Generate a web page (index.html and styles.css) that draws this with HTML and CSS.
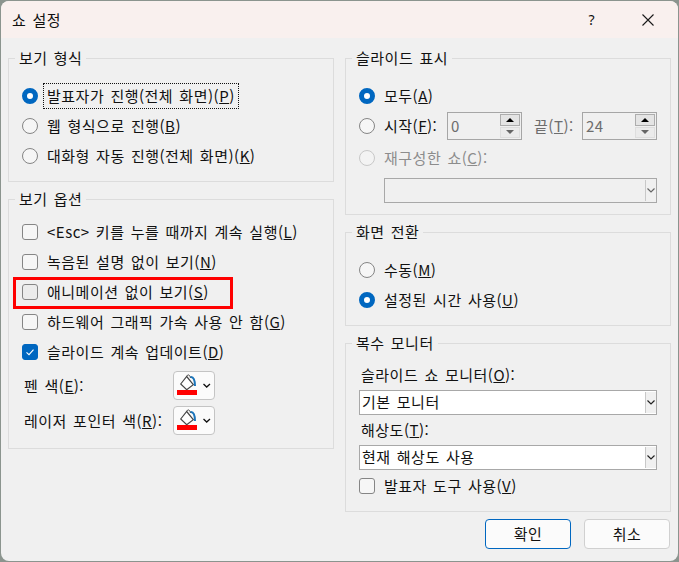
FILE: index.html
```html
<!DOCTYPE html>
<html lang="ko">
<head>
<meta charset="utf-8">
<title>쇼 설정</title>
<link rel="stylesheet" href="styles.css">
</head>
<body>
<div class="window">
  <header class="titlebar">
    <span class="title">쇼 설정</span>
    <span class="help">?</span>
    <svg class="close" width="12" height="12" viewBox="0 0 12 12"><path d="M0.5 0.5L11.5 11.5M11.5 0.5L0.5 11.5" stroke="#1a1a1a" stroke-width="1.1" fill="none"/></svg>
  </header>
  <div class="content">
    <div class="column">
      <fieldset class="group g-type">
        <legend>보기 형식</legend>
        <div class="row"><span class="radio on"></span><span class="focus">발표자가 진행(전체 화면)(<u>P</u>)</span></div>
        <div class="row"><span class="radio"></span><span>웹 형식으로 진행(<u>B</u>)</span></div>
        <div class="row"><span class="radio"></span><span>대화형 자동 진행(전체 화면)(<u>K</u>)</span></div>
      </fieldset>
      <fieldset class="group g-options">
        <legend>보기 옵션</legend>
        <div class="row"><span class="check"></span><span>&lt;Esc&gt; 키를 누를 때까지 계속 실행(<u>L</u>)</span></div>
        <div class="row"><span class="check"></span><span>녹음된 설명 없이 보기(<u>N</u>)</span></div>
        <div class="row marked"><span class="check hover"></span><span>애니메이션 없이 보기(<u>S</u>)</span><span class="redbox"></span></div>
        <div class="row"><span class="check"></span><span>하드웨어 그래픽 가속 사용 안 함(<u>G</u>)</span></div>
        <div class="row"><span class="check on"><svg width="16" height="16" viewBox="0 0 16 16"><path d="M4.5 8.3L7 10.6L11.5 5.6" stroke="#fff" stroke-width="1.1" fill="none"/></svg></span><span>슬라이드 계속 업데이트(<u>D</u>)</span></div>
        <div class="color-row first">
          <span class="color-label">펜 색(<u>E</u>):</span>
          <button class="color-btn" type="button"><svg width="41" height="27" viewBox="1 1 41 27"><path d="M7.7 13L13.7 5.5L20.3 13.7L13.7 18.7Z" fill="#fff" stroke="#444" stroke-width="1.2"/><path d="M13.7 5.5C14.5 3 17 3.5 17.5 7" fill="none" stroke="#444" stroke-width="1"/><path d="M17.5 6C20.5 5.5 22 9 22 15" fill="none" stroke="#1b75bb" stroke-width="2"/><rect x="4" y="19" width="20" height="5" fill="#f00"/><path d="M30.5 13L33.7 16L37 13" fill="none" stroke="#111" stroke-width="1.3"/></svg></button>
        </div>
        <div class="color-row">
          <span class="color-label">레이저 포인터 색(<u>R</u>):</span>
          <button class="color-btn" type="button"><svg width="41" height="27" viewBox="1 1 41 27"><path d="M7.7 13L13.7 5.5L20.3 13.7L13.7 18.7Z" fill="#fff" stroke="#444" stroke-width="1.2"/><path d="M13.7 5.5C14.5 3 17 3.5 17.5 7" fill="none" stroke="#444" stroke-width="1"/><path d="M17.5 6C20.5 5.5 22 9 22 15" fill="none" stroke="#1b75bb" stroke-width="2"/><rect x="4" y="19" width="20" height="5" fill="#f00"/><path d="M30.5 13L33.7 16L37 13" fill="none" stroke="#111" stroke-width="1.3"/></svg></button>
        </div>
      </fieldset>
    </div>
    <div class="column">
      <fieldset class="group g-slides">
        <legend>슬라이드 표시</legend>
        <div class="row"><span class="radio on"></span><span>모두(<u>A</u>)</span></div>
        <div class="row range">
          <span class="radio"></span><span class="range-from">시작(<u>F</u>):</span>
          <div class="spin"><span class="spin-val">0</span><span class="spin-btns"><span class="up"></span><span class="down"></span></span></div>
          <span class="range-to">끝(<u>T</u>):</span>
          <div class="spin"><span class="spin-val">24</span><span class="spin-btns"><span class="up"></span><span class="down"></span></span></div>
        </div>
        <div class="row disabled"><span class="radio off"></span><span>재구성한 쇼(<u>C</u>):</span></div>
        <div class="combo combo-off"><span class="combo-val"></span><span class="combo-arrow"><svg width="8" height="5" viewBox="0 0 8 5"><path d="M0.5 0.5L4 4L7.5 0.5" fill="none" stroke="#666" stroke-width="1.2"/></svg></span></div>
      </fieldset>
      <fieldset class="group g-trans">
        <legend>화면 전환</legend>
        <div class="row"><span class="radio"></span><span>수동(<u>M</u>)</span></div>
        <div class="row"><span class="radio on"></span><span>설정된 시간 사용(<u>U</u>)</span></div>
      </fieldset>
      <fieldset class="group g-monitor">
        <legend>복수 모니터</legend>
        <div class="field-label">슬라이드 쇼 모니터(<u>O</u>):</div>
        <div class="combo"><span class="combo-val">기본 모니터</span><span class="combo-arrow"><svg width="8" height="5" viewBox="0 0 8 5"><path d="M0.5 0.5L4 4L7.5 0.5" fill="none" stroke="#222" stroke-width="1.2"/></svg></span></div>
        <div class="field-label">해상도(<u>T</u>):</div>
        <div class="combo"><span class="combo-val">현재 해상도 사용</span><span class="combo-arrow"><svg width="8" height="5" viewBox="0 0 8 5"><path d="M0.5 0.5L4 4L7.5 0.5" fill="none" stroke="#222" stroke-width="1.2"/></svg></span></div>
        <div class="row"><span class="check"></span><span>발표자 도구 사용(<u>V</u>)</span></div>
      </fieldset>
      <div class="actions">
        <button class="btn primary" type="button">확인</button>
        <button class="btn" type="button">취소</button>
      </div>
    </div>
  </div>
</div>
</body>
</html>
```

FILE: styles.css
```css
* { box-sizing: border-box; }
html, body { margin: 0; padding: 0; }
body {
  width: 679px;
  height: 562px;
  overflow: hidden;
  background: #8b948e;
  padding: 1px 1px 1px 1px;
  font-family: "Noto Sans CJK KR", "Noto Sans", sans-serif;
  font-size: 15px;
  letter-spacing: 0.5px;
  word-spacing: 1.5px;
  line-height: 20px;
  color: #111;
}
u { text-underline-offset: 1px; }
.window {
  width: 677px;
  height: 560px;
  background: #f0f0f0;
  border-radius: 8px;
  overflow: hidden;
}
.titlebar {
  height: 37px;
  background: #f9f0ee;
  display: flex;
  align-items: center;
  padding-left: 11px;
}
.title { font-size: 15px; flex: 1; }
.help { font-size: 14px; margin-right: 47px; font-family: "Noto Sans", sans-serif; }
.close { margin-right: 24px; }
.content {
  display: flex;
  gap: 11px;
  padding: 0 7px;
}
.column { width: 326px; display: flex; flex-direction: column; }
.group {
  margin: 0;
  padding: 0 13px;
  border: 1px solid #dcdcdc;
  min-width: 0;
}
.group legend {
  padding: 0 4px;
  margin-left: -7px;
  height: 20px;
  line-height: 20px;
}
.g-type { margin-top: 10px; height: 134px; padding-top: 13px; }
.g-options { margin-top: 7px; height: 260px; padding-top: 8px; }
.g-slides { margin-top: 10px; height: 167px; padding-top: 13px; }
.g-trans { margin-top: 7px; height: 104px; padding-top: 13px; }
.g-monitor { margin-top: 7px; height: 179px; padding-top: 12px; }
.row {
  height: 30px;
  display: flex;
  align-items: center;
  gap: 9px;
  position: relative;
  white-space: nowrap;
}
.radio {
  width: 16px;
  height: 16px;
  border-radius: 50%;
  border: 1px solid #858585;
  background: #f6f6f6;
  flex: none;
}
.radio.on { border: 5px solid #0067c0; background: #fff; }
.radio.off { border-color: #c8c8c8; background: #f3f3f3; }
.check {
  width: 16px;
  height: 16px;
  border-radius: 3px;
  border: 1px solid #858585;
  background: #f6f6f6;
  flex: none;
}
.check.hover { background: #ececec; }
.check.on { background: #0067c0; border-color: #0067c0; }
.check.on svg { display: block; margin: -1px; }
.focus { outline: 1px dotted #111; padding: 2px 3px; margin-left: -3px; }
.redbox {
  position: absolute;
  left: -9px;
  top: 0;
  width: 220px;
  height: 32px;
  border: 3px solid #f00;
}
.color-row {
  display: flex;
  align-items: center;
  height: 35px;
  padding-left: 2px;
}
.color-row.first { margin-top: 1px; }
.color-label { width: 149px; white-space: nowrap; }
.color-btn {
  width: 42px;
  height: 29px;
  padding: 0;
  border: 1px solid #c4c4c4;
  border-radius: 4px;
  background: #fbfbfb;
}
.color-btn svg { display: block; }
.range { gap: 0; }
.range .radio { margin-right: 9px; }
.range-from { width: 63px; }
.range-to { width: 60px; padding-left: 12px; color: #6d6d6d; }
.spin {
  width: 75px;
  height: 28px;
  border: 1px solid #a6a6a6;
  display: flex;
  justify-content: space-between;
  padding: 1px;
  color: #6d6d6d;
}
.spin-val { padding-left: 2px; line-height: 24px; }
.spin-btns { width: 20px; display: flex; flex-direction: column; gap: 1px; }
.up, .down { flex: 1; position: relative; display: flex; align-items: center; justify-content: center; }
.up { background: #e4e4e4; border: 1px solid #adadad; }
.down { background: #ebebeb; border: 1px solid #dedede; }
.up::before, .down::before {
  content: "";
  border-left: 4px solid transparent;
  border-right: 4px solid transparent;
}
.up::before { border-bottom: 4px solid #000; }
.down::before { border-top: 4px solid #666; }
.disabled { color: #8c8c8c; margin-top: 2px; }
.combo {
  width: 298px;
  height: 25px;
  border: 1px solid #a8a8a8;
  background: #fff;
  display: flex;
  justify-content: space-between;
}
.combo-val { padding-left: 2px; line-height: 22px; white-space: nowrap; }
.combo-arrow {
  width: 11px;
  margin: 1px 0;
  border-left: 1px solid #c8c8c8;
  background: #f0f0f0;
  display: flex;
  align-items: center;
  justify-content: center;
}
.combo-off {
  width: 273px;
  margin-left: 25px;
  margin-top: 5px;
  background: #f0f0f0;
}
.field-label { height: 25px; line-height: 20px; padding-left: 2px; white-space: nowrap; }
.g-monitor .row { margin-top: 1px; }
.g-monitor .combo + .field-label { margin-top: 5px; }
.actions {
  display: flex;
  justify-content: flex-end;
  gap: 13px;
  margin-top: 7px;
  padding-right: 1px;
}
.btn {
  width: 86px;
  height: 30px;
  border: 1px solid #d0d0d0;
  border-radius: 4px;
  background: #fbfbfb;
  font: inherit;
  letter-spacing: inherit;
  color: #111;
  padding: 0;
}
.btn.primary { border: 1px solid #0067c0; }
```
